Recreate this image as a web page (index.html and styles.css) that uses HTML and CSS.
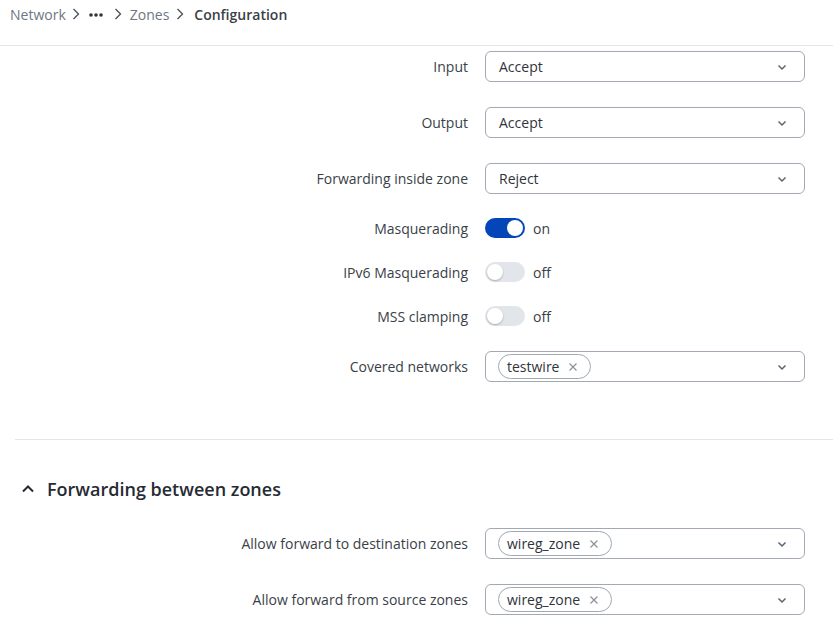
FILE: index.html
```html
<!DOCTYPE html>
<html lang="en">
<head>
<meta charset="utf-8">
<title>Zones configuration</title>
<link rel="stylesheet" href="styles.css">
</head>
<body>
<header class="topbar">
  <nav class="crumbs">
    <a class="crumb" href="#">Network</a>
    <svg class="sep" viewBox="0 0 8 12"><path d="M1.5 1 6.5 6 1.5 11"/></svg>
    <svg class="dots" viewBox="0 0 14 4"><circle cx="2" cy="2" r="1.8"/><circle cx="7" cy="2" r="1.8"/><circle cx="12" cy="2" r="1.8"/></svg>
    <svg class="sep" viewBox="0 0 8 12"><path d="M1.5 1 6.5 6 1.5 11"/></svg>
    <a class="crumb" href="#">Zones</a>
    <svg class="sep last" viewBox="0 0 8 12"><path d="M1.5 1 6.5 6 1.5 11"/></svg>
    <span class="crumb current">Configuration</span>
  </nav>
</header>

<main class="content">
  <section class="form">
    <div class="row">
      <label class="label">Input</label>
      <div class="select"><span class="value">Accept</span><svg class="caret" viewBox="0 0 12 12"><path d="M2.5 4.5 6 8 9.5 4.5"/></svg></div>
    </div>
    <div class="row">
      <label class="label">Output</label>
      <div class="select"><span class="value">Accept</span><svg class="caret" viewBox="0 0 12 12"><path d="M2.5 4.5 6 8 9.5 4.5"/></svg></div>
    </div>
    <div class="row">
      <label class="label">Forwarding inside zone</label>
      <div class="select"><span class="value">Reject</span><svg class="caret" viewBox="0 0 12 12"><path d="M2.5 4.5 6 8 9.5 4.5"/></svg></div>
    </div>
    <div class="row row-toggle first-toggle">
      <label class="label">Masquerading</label>
      <div class="switch-wrap"><span class="switch on"><span class="knob"></span></span><span class="state">on</span></div>
    </div>
    <div class="row row-toggle">
      <label class="label">IPv6 Masquerading</label>
      <div class="switch-wrap"><span class="switch"><span class="knob"></span></span><span class="state">off</span></div>
    </div>
    <div class="row row-toggle">
      <label class="label">MSS clamping</label>
      <div class="switch-wrap"><span class="switch"><span class="knob"></span></span><span class="state">off</span></div>
    </div>
    <div class="row after-toggle">
      <label class="label">Covered networks</label>
      <div class="select multi">
        <span class="chip">testwire<svg class="x" viewBox="0 0 10 10"><path d="M1.5 1.5 8.5 8.5M8.5 1.5 1.5 8.5"/></svg></span>
        <svg class="caret" viewBox="0 0 12 12"><path d="M2.5 4.5 6 8 9.5 4.5"/></svg>
      </div>
    </div>
  </section>

  <hr class="divider">

  <section class="form">
    <h2 class="section-title"><svg class="up" viewBox="0 0 12 12"><path d="M1 8.5 6 3.5 11 8.5"/></svg>Forwarding between zones</h2>
    <div class="row">
      <label class="label">Allow forward to destination zones</label>
      <div class="select multi">
        <span class="chip">wireg_zone<svg class="x" viewBox="0 0 10 10"><path d="M1.5 1.5 8.5 8.5M8.5 1.5 1.5 8.5"/></svg></span>
        <svg class="caret" viewBox="0 0 12 12"><path d="M2.5 4.5 6 8 9.5 4.5"/></svg>
      </div>
    </div>
    <div class="row">
      <label class="label">Allow forward from source zones</label>
      <div class="select multi">
        <span class="chip">wireg_zone<svg class="x" viewBox="0 0 10 10"><path d="M1.5 1.5 8.5 8.5M8.5 1.5 1.5 8.5"/></svg></span>
        <svg class="caret" viewBox="0 0 12 12"><path d="M2.5 4.5 6 8 9.5 4.5"/></svg>
      </div>
    </div>
  </section>
</main>
</body>
</html>
```

FILE: styles.css
```css
* { box-sizing: border-box; }

html, body {
  margin: 0;
  padding: 0;
  background: #ffffff;
  font-family: "Open Sans", "Noto Sans", sans-serif;
  font-size: 14px;
  color: #3a3f48;
  overflow: hidden;
}

/* breadcrumb bar */
.topbar {
  height: 46px;
  border-bottom: 1px solid #e4e6e9;
  padding: 4px 0 0 10px;
}

.crumbs {
  display: flex;
  align-items: center;
  height: 20px;
  font-size: 14px;
}

.crumb {
  color: #6e7682;
  text-decoration: none;
}

.crumb.current {
  color: #3a3f48;
  font-weight: 600;
}

.sep {
  width: 8px;
  height: 12px;
  margin: 0 8px 0 6px;
  fill: none;
  stroke: #4a4f58;
  stroke-width: 1.3;
}

.sep.last {
  margin: 0 10px 0 7px;
}

.dots {
  width: 14px;
  height: 4px;
  margin: 1px 5px 0 1px;
  fill: #2f343c;
}

/* form layout */
.content {
  padding: 5px 28px 0 15px;
}

.form {
  display: flex;
  flex-direction: column;
}

.row {
  display: grid;
  grid-template-columns: 453px 320px;
  column-gap: 17px;
  align-items: center;
  height: 31px;
  margin-bottom: 25px;
}

.label {
  text-align: right;
  color: #3a3f48;
}

.row-toggle {
  height: 20px;
  margin-bottom: 24px;
}

.first-toggle {
  margin-top: -1px;
}

.after-toggle {
  margin-top: 1px;
  margin-bottom: 57px;
}

/* select boxes */
.select {
  display: flex;
  align-items: center;
  height: 31px;
  border: 1px solid #a3a9b2;
  border-radius: 6px;
  padding: 0 16px 0 13px;
  background: #fff;
}

.select .value {
  flex: 1;
  color: #2f343c;
}

.caret {
  width: 12px;
  height: 12px;
  margin-left: auto;
  fill: none;
  stroke: #5b6370;
  stroke-width: 1.5;
}

.multi {
  padding-left: 12px;
}

.chip {
  display: inline-flex;
  align-items: center;
  height: 25px;
  border: 1px solid #a3a9b2;
  border-radius: 13px;
  padding: 0 12px 0 8px;
  color: #2f343c;
}

.chip .x {
  width: 10px;
  height: 10px;
  margin-left: 9px;
  fill: none;
  stroke: #8a909a;
  stroke-width: 1.2;
}

/* switches */
.switch-wrap {
  display: flex;
  align-items: center;
  gap: 8px;
}

.switch {
  position: relative;
  width: 40px;
  height: 20px;
  border-radius: 10px;
  background: #e2e5ea;
}

.switch .knob {
  position: absolute;
  top: 2px;
  left: 2px;
  width: 16px;
  height: 16px;
  border-radius: 50%;
  background: #fff;
  box-shadow: 0 1px 2px rgba(0, 0, 0, 0.25);
}

.switch.on {
  background: #0445b8;
}

.switch.on .knob {
  left: 22px;
  box-shadow: none;
}

.state {
  color: #3a3f48;
}

/* section break */
.divider {
  border: 0;
  border-top: 1px solid #e4e6e9;
  margin: 0 -28px 0 0;
}

.section-title {
  display: flex;
  align-items: center;
  margin: 37px 0 27px 7px;
  font-size: 18px;
  font-weight: 600;
  color: #262b33;
  height: 24px;
}

.up {
  width: 12px;
  height: 12px;
  margin-right: 13px;
  fill: none;
  stroke: #262b33;
  stroke-width: 2;
}
```
